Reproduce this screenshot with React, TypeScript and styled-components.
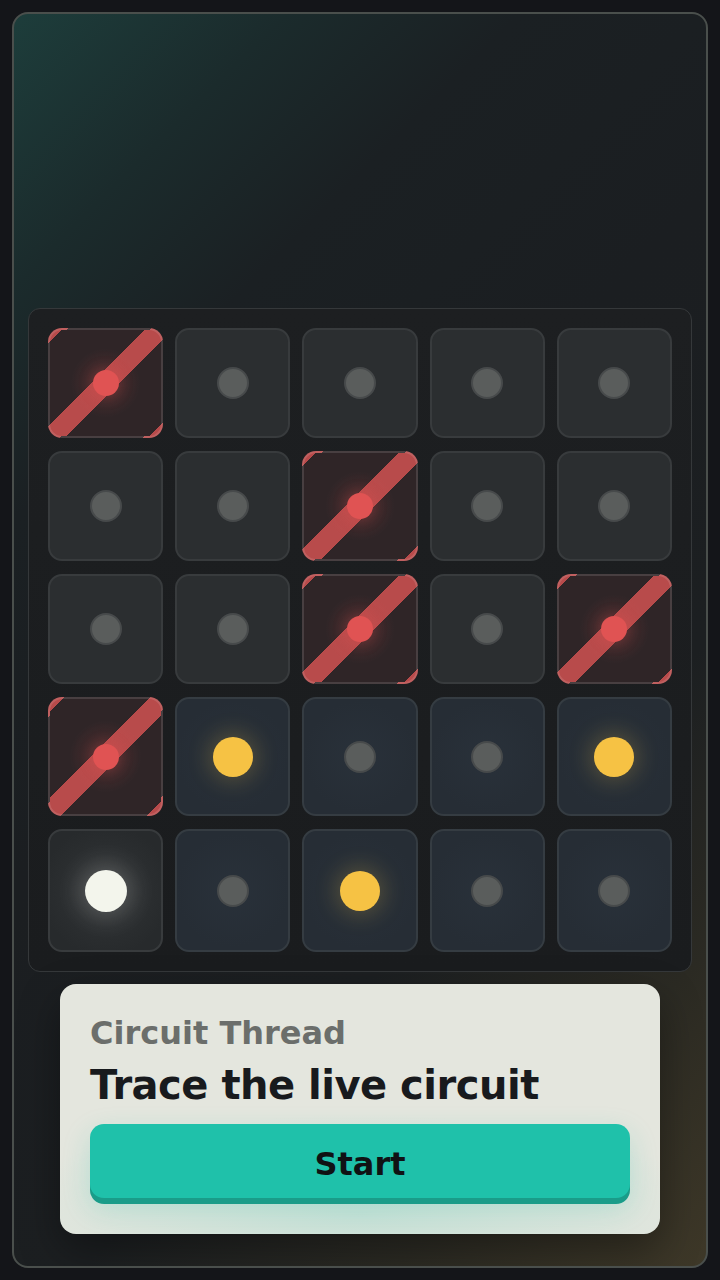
import React from "react";
import styled, { createGlobalStyle, css } from "styled-components";

const GlobalStyle = createGlobalStyle`
  html, body {
    margin: 0;
    padding: 0;
    background: #141519;
  }
  body {
    font-family: "DejaVu Sans", "Noto Sans", sans-serif;
  }
  * { box-sizing: border-box; }
`;

const Frame = styled.div`
  margin: 12px;
  height: 1256px;
  border: 2px solid #4a4f4c;
  border-radius: 16px;
  padding: 0 14px 32px;
  display: flex;
  flex-direction: column;
  justify-content: flex-end;
  align-items: stretch;
  background:
    linear-gradient(
      135deg,
      #1d3d3b 0%,
      #1b2b2c 14%,
      #1b2023 26%,
      #1b1e21 45%,
      #1c1f21 68%,
      #2b2a23 84%,
      #3e3828 100%
    );
  overflow: hidden;
`;

const Board = styled.div`
  display: grid;
  grid-template-columns: repeat(5, 1fr);
  grid-template-rows: 110px 110px 110px 119px 123px;
  gap: 13px 12px;
  padding: 19px 19px;
  background: linear-gradient(180deg, #1d1f21 0%, #1a1c1e 100%);
  border: 1.5px solid #35383a;
  border-radius: 12px;
`;

type Kind = "blocked" | "idle" | "lit" | "source";
type Dot = "small" | "gold" | "white";

const kindStyles = {
  blocked: css`
    border-color: rgba(255, 255, 255, 0.12);
    background:
      radial-gradient(circle at 50% 50%, rgba(224, 82, 82, 0.2) 0%, rgba(224, 82, 82, 0) 45%),
      linear-gradient(
        135deg,
        #b84b4b 0%,
        #b84b4b 5.5%,
        transparent 5.5%,
        transparent 43.5%,
        #b84b4b 43.5%,
        #b84b4b 56.5%,
        transparent 56.5%,
        transparent 94.5%,
        #b84b4b 94.5%
      ),
      #2f2527;
  `,
  idle: css`
    border-color: #383b3d;
    background: #2b2e30;
  `,
  lit: css`
    border-color: #353c42;
    background: radial-gradient(circle at 50% 50%, #29313a 0%, #262d35 70%);
  `,
  source: css`
    border-color: #383b3d;
    background: radial-gradient(circle at 50% 50%, #3c3f41 0%, #2c2f31 45%, #272a2c 80%);
  `,
};

const Cell = styled.div<{ $kind: Kind }>`
  border: 2px solid;
  border-radius: 14px;
  display: flex;
  align-items: center;
  justify-content: center;
  ${(p) => kindStyles[p.$kind]}
`;

const dotStyles = {
  small: css`
    width: 32px;
    height: 32px;
    background: #5a5d5c;
    border: 2px solid #474a4b;
  `,
  gold: css`
    width: 40px;
    height: 40px;
    background: #f6c244;
    box-shadow: 0 0 22px 4px rgba(246, 194, 68, 0.22);
  `,
  white: css`
    width: 42px;
    height: 42px;
    background: #f3f5ec;
    box-shadow: 0 0 26px 6px rgba(243, 245, 236, 0.18);
  `,
};

const Dot = styled.div<{ $dot: Dot }>`
  border-radius: 50%;
  ${(p) => dotStyles[p.$dot]}
`;

const RedDot = styled.div`
  width: 26px;
  height: 26px;
  border-radius: 50%;
  background: #e05353;
  box-shadow: 0 0 14px 1px rgba(224, 83, 83, 0.28);
`;

const Card = styled.div`
  margin: 12px 32px 0;
  padding: 30px 30px 30px;
  border-radius: 16px;
  background:
    radial-gradient(ellipse 60% 40% at 50% 92%, rgba(31, 193, 170, 0.14), rgba(31, 193, 170, 0) 100%),
    #e4e6de;
  display: flex;
  flex-direction: column;
  box-shadow: 0 16px 40px rgba(0, 0, 0, 0.35);
`;

const Eyebrow = styled.div`
  font-family: "DejaVu Sans", sans-serif;
  font-weight: 700;
  font-size: 32px;
  line-height: 38px;
  color: #6b6e6b;
`;

const Title = styled.h1`
  margin: 9px 0 0;
  font-family: "DejaVu Sans", sans-serif;
  font-weight: 700;
  font-size: 40px;
  line-height: 48px;
  letter-spacing: -0.5px;
  color: #181a1d;
`;

const StartButton = styled.button`
  margin: 15px 0 6px;
  height: 74px;
  padding: 6px 0 0;
  border: none;
  border-radius: 14px;
  background: #1fc1aa;
  box-shadow: 0 6px 0 #1a9c89, 0 10px 28px rgba(31, 193, 170, 0.22);
  font-family: "DejaVu Sans", sans-serif;
  font-weight: 700;
  font-size: 32px;
  color: #101214;
  cursor: pointer;
`;

type CellSpec = { kind: Kind; dot?: Dot };

const B: CellSpec = { kind: "blocked" };
const I: CellSpec = { kind: "idle", dot: "small" };
const L: CellSpec = { kind: "lit", dot: "small" };
const G: CellSpec = { kind: "lit", dot: "gold" };
const S: CellSpec = { kind: "source", dot: "white" };

const grid: CellSpec[] = [
  B, I, I, I, I,
  I, I, B, I, I,
  I, I, B, I, B,
  B, G, L, L, G,
  S, L, G, L, L,
];

export default function App() {
  return (
    <>
      <GlobalStyle />
      <Frame>
        <Board>
          {grid.map((c, i) => (
            <Cell key={i} $kind={c.kind}>
              {c.kind === "blocked" ? <RedDot /> : c.dot ? <Dot $dot={c.dot} /> : null}
            </Cell>
          ))}
        </Board>
        <Card>
          <Eyebrow>Circuit Thread</Eyebrow>
          <Title>Trace the live circuit</Title>
          <StartButton>Start</StartButton>
        </Card>
      </Frame>
    </>
  );
}
